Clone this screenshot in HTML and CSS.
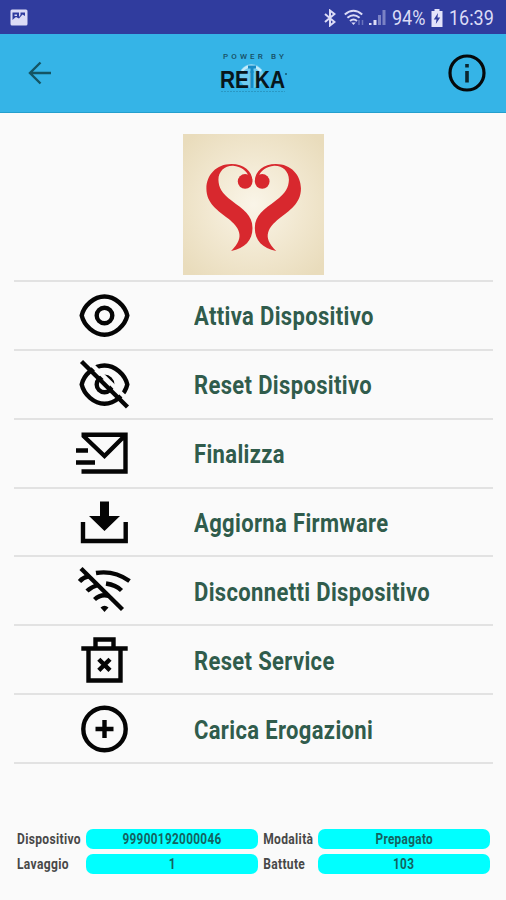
FILE: index.html
```html
<!DOCTYPE html>
<html lang="it">
<head>
    <meta charset="UTF-8">
    <meta name="viewport" content="width=device-width, initial-scale=1.0">
    <title>Reika</title>
    <link rel="stylesheet" href="styles.css">
</head>
<body>

    <div class="status-bar">
        <svg class="status-picture" width="18" height="17" viewBox="0 0 18 17">
            <rect x="0.5" y="0.5" width="17" height="16" rx="1.5" fill="#dcdcf6"/>
            <path d="M2.5 11V3.5H9V8L10.5 6V3.5H15V7L12.5 5.5L9 9.5L6 8L3.5 10Z" fill="#303c9e"/>
            <path d="M4.5 5.5H7V7H4.5Z" fill="#dcdcf6"/>
        </svg>
        <div class="status-right">
            <svg width="12" height="18" viewBox="0 0 12 18" fill="none" stroke="#dcdcf6" stroke-width="2">
                <path d="M1 5L10.5 13L6 16.5V1.5L10.5 5L1 13"/>
            </svg>
            <svg class="status-wifi" width="21" height="17" viewBox="0 0 21 17" fill="none" stroke="#dcdcf6" stroke-width="2">
                <path d="M0.8 5.5Q9.5 -2 18.2 5.5M3.4 8.8Q9.5 3.6 15.6 8.8M6 12Q9.5 9 13 12"/>
                <path d="M7.3 13.5H11.7L9.5 16Z" fill="#dcdcf6" stroke="none"/>
                <path d="M15 11V16M18.5 11V16" stroke="#6a73bd" stroke-width="1.5"/>
            </svg>
            <svg class="status-signal" width="17" height="17" viewBox="0 0 17 17">
                <path d="M0 14H2.5V16H0ZM4.5 11H7.5V16H4.5Z" fill="#dcdcf6"/>
                <path d="M9 6H12V16H9ZM13.5 1H16.5V16H13.5Z" fill="#7b82c5"/>
            </svg>
            <span class="status-text battery-level">94%</span>
            <svg class="status-battery" width="12" height="18" viewBox="0 0 12 18">
                <path d="M3.5 0H8.5V2H11.5V18H0.5V2H3.5Z" fill="#e4e4fa"/>
                <path d="M7 4L2.8 10.5H5.5L4.8 15L9.2 8.5H6.5Z" fill="#303c9e"/>
            </svg>
            <span class="status-text clock">16:39</span>
        </div>
    </div>

    <header class="app-bar">
        <svg width="24" height="24" viewBox="0 0 24 24" fill="none" stroke="#145564" stroke-width="2.4">
            <path d="M23 12H2M12.5 1.5L2 12L12.5 22.5"/>
        </svg>
        <svg class="brand" width="72" height="46" viewBox="0 0 72 46">
            <defs>
                <!-- only the middle letter is blue -->
                <linearGradient id="letters" gradientUnits="userSpaceOnUse" x1="0" y1="0" x2="72" y2="0">
                    <stop offset="0.452" stop-color="#07161c"/>
                    <stop offset="0.452" stop-color="#168bc6"/>
                    <stop offset="0.529" stop-color="#168bc6"/>
                    <stop offset="0.529" stop-color="#07161c"/>
                </linearGradient>
            </defs>
            <circle cx="34.5" cy="26" r="12" fill="#6fcbf0"/>
            <path d="M25 21Q34 11 44 21" fill="none" stroke="#c3ebfa" stroke-width="2.5"/>
            <path d="M31 17H39M35 17V23" stroke="#168bc6" stroke-width="3"/>
            <text class="brand-top" x="6" y="9" textLength="61">POWER BY</text>
            <text class="brand-name" x="3" y="38" textLength="65" lengthAdjust="spacingAndGlyphs">REIKA</text>
            <circle cx="69" cy="24" r="1" fill="#14576f"/>
            <path d="M4 41.5H68" stroke="#2a98c4" stroke-width="1.2" stroke-dasharray="2 1"/>
        </svg>
        <svg width="38" height="38" viewBox="0 0 38 38">
            <circle cx="19" cy="19" r="17" fill="none" stroke="#05090b" stroke-width="3.2"/>
            <path d="M17.2 17H20.8V28.5H17.2ZM17.2 10H20.8V13.6H17.2Z" fill="#0b262f"/>
        </svg>
    </header>

    <main>
        <svg class="heart-logo" width="141" height="141" viewBox="40 27 422 422">
            <defs>
                <radialGradient id="paper" cx="0.5" cy="0.5" r="0.65">
                    <stop offset="0" stop-color="#faf5e8"/>
                    <stop offset="0.55" stop-color="#f1e7cf"/>
                    <stop offset="1" stop-color="#e9dcbc"/>
                </radialGradient>
                <g id="half" fill="#d8282e">
                    <circle cx="226" cy="169" r="22"/>
                    <path d="M248 167C247 138 222 117 185 117C140 117 110 150 110 190C110 235 145 256 176 281C206 306 229 335 184 377C225 369 248 345 248 308C248 270 220 253 186 227C155 204 147 187 146 164C146 138 166 121 190 122C215 124 230 138 236 152Z"/>
                </g>
            </defs>
            <rect x="40" y="27" width="422" height="422" fill="url(#paper)"/>
            <use href="#half"/>
            <use href="#half" transform="matrix(-1 0 0 1 503 0)"/>
        </svg>

        <ul class="menu">
            <li>
                <svg class="icon" viewBox="0 0 60 60">
                    <path d="M7.7 30.5C10 20.5 20 11.5 30.5 11.5S51 20.5 53.3 30.5C51 40.5 41 49.7 30.5 49.7S10 40.5 7.7 30.5Z"/>
                    <circle cx="30.5" cy="30.5" r="7.8"/>
                </svg>
                <span class="label">Attiva Dispositivo</span>
            </li>
            <li>
                <svg class="icon" viewBox="0 0 60 60">
                    <path d="M7.7 30.5C10 20.5 20 11.5 30.5 11.5S51 20.5 53.3 30.5C51 40.5 41 49.7 30.5 49.7S10 40.5 7.7 30.5Z"/>
                    <circle cx="30.5" cy="30.5" r="7.8"/>
                    <path class="gap" d="M13 6L57 49"/>
                    <path d="M7.5 7.5L53.5 53"/>
                </svg>
                <span class="label">Reset Dispositivo</span>
            </li>
            <li>
                <svg class="icon" viewBox="0 0 60 60">
                    <path d="M7.5 11.7H51.5V48.5H7.5M9 12.5L30.5 33L51 12.5"/>
                    <path d="M2 27.5H14M2 39.5H21"/>
                </svg>
                <span class="label">Finalizza</span>
            </li>
            <li>
                <svg class="icon" viewBox="0 0 60 60">
                    <path d="M9 30V49H51.7V30"/>
                    <path class="solid" d="M26 9.5H35V24H46L30.5 39L15 24H26Z"/>
                </svg>
                <span class="label">Aggiorna Firmware</span>
            </li>
            <li>
                <svg class="icon" viewBox="0 0 60 60">
                    <path d="M22 12Q40 9 55.5 20M32 22.5Q42 24 47.5 29.5"/>
                    <path d="M5.5 20.5Q9 16.5 15 15M13 30Q17 26 24 24M20.5 38.5Q27 32.5 35 35"/>
                    <path d="M7 7.5L48.5 48.5"/>
                    <path class="solid" d="M26.5 46.5Q30.5 43 34.5 46.5L30.5 51Z"/>
                </svg>
                <span class="label">Disconnetti Dispositivo</span>
            </li>
            <li>
                <svg class="icon" viewBox="0 0 60 60">
                    <path d="M7.3 18.5H53.7M21.5 18V9.5H39.5V18M14.5 18.5V50.5H46.5V18.5"/>
                    <path d="M24.8 29.2L36 40.4M36 29.2L24.8 40.4"/>
                </svg>
                <span class="label">Reset Service</span>
            </li>
            <li>
                <svg class="icon" viewBox="0 0 60 60">
                    <circle cx="30.5" cy="30" r="21.2"/>
                    <path d="M21.5 30H39.5M30.5 21V39"/>
                </svg>
                <span class="label">Carica Erogazioni</span>
            </li>
        </ul>
    </main>

    <footer class="info">
        <span class="name">Dispositivo</span>
        <div class="value"><span>99900192000046</span></div>
        <span class="name second">Modalità</span>
        <div class="value"><span>Prepagato</span></div>
        <span class="name">Lavaggio</span>
        <div class="value"><span>1</span></div>
        <span class="name second">Battute</span>
        <div class="value"><span>103</span></div>
    </footer>

</body>
</html>
```

FILE: styles.css
```css
* {
    box-sizing: border-box;
}
body {
    margin: 0;
    height: 900px;
    background-color: #fafafa;
    font-family: Roboto, "Liberation Sans", sans-serif;
    overflow: hidden;
}
.status-bar {
    display: flex;
    justify-content: space-between;
    align-items: center;
    height: 34px;
    padding: 1px 11px 0 10px;
    background-color: #303c9e;
}
.status-right {
    display: flex;
    align-items: center;
}
.status-wifi {
    margin-left: 8px;
}
.status-signal {
    margin-left: 4px;
}
.status-text {
    color: #dcdcf6;
    font-size: 20px;
    line-height: 24px;
    white-space: nowrap;
    transform: scaleX(0.9);
    transform-origin: left;
}
.battery-level {
    width: 33px;
    margin-left: 6px;
}
.status-battery {
    margin-left: 6px;
}
.clock {
    width: 46px;
    margin-left: 6px;
}
.app-bar {
    display: flex;
    justify-content: space-between;
    align-items: center;
    height: 79px;
    padding: 0 20px 0 28px;
    background-color: #35b4e7;
    border-bottom: 1px solid #249fcd;
}
.brand {
    margin-left: 5px;
}
.brand-top {
    fill: #174e64;
    font-size: 8px;
    font-weight: 500;
}
.brand-name {
    fill: url(#letters);
    font-family: "Liberation Sans", Arial, sans-serif;
    font-size: 23px;
    font-weight: bold;
}
.heart-logo {
    display: block;
    margin: 21px auto 0 183px;
}
.menu {
    margin: 5px 13px 0 14px;
    padding: 0;
    border-top: 2px solid #e2e2e2;
    list-style: none;
}
.menu li {
    display: flex;
    align-items: center;
    height: 68.86px;
    padding-left: 60px;
    border-bottom: 2px solid #e2e2e2;
}
.icon {
    width: 60px;
    height: 60px;
    flex: none;
    fill: none;
    stroke: #050505;
    stroke-width: 4.4;
}
.icon .solid {
    fill: #050505;
    stroke: none;
}
.icon .gap {
    stroke: #fafafa;
    stroke-width: 4;
}
.label {
    margin-left: 60px;
    padding-top: 3px;
    color: #305c4c;
    font-size: 25px;
    font-weight: bold;
    letter-spacing: 0.4px;
    white-space: nowrap;
    transform: scaleX(0.88);
    transform-origin: left;
}
.info {
    display: grid;
    grid-template-columns: 69px 172px 60px 172px;
    grid-template-rows: 20px 20px;
    row-gap: 5px;
    margin: 65px 0 0 17px;
    align-items: center;
    color: #484848;
    font-size: 14px;
    font-weight: bold;
    letter-spacing: 0.4px;
}
.name {
    white-space: nowrap;
    transform: scaleX(0.86);
    transform-origin: left;
}
.second {
    padding-left: 6px;
}
.value {
    height: 20px;
    border-radius: 7px;
    background-color: #00ffff;
    color: #14635f;
    line-height: 21px;
    text-align: center;
}
.value span {
    display: inline-block;
    transform: scaleX(0.84);
}
```
